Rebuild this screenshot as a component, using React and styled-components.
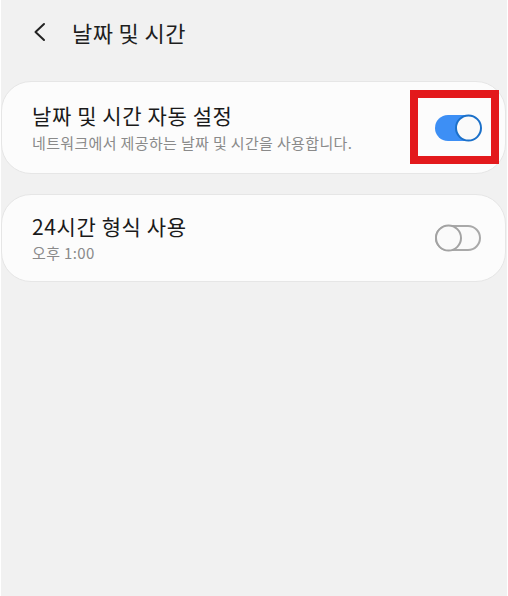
import React from "react";
import styled, { createGlobalStyle } from "styled-components";

const Global = createGlobalStyle`
  html, body { margin: 0; padding: 0; background: #f1f1f1; }
  body { font-family: "Noto Sans CJK KR", "Noto Sans", Roboto, sans-serif; }
`;

const Page = styled.div`
  width: 508px;
  height: 596px;
  box-sizing: border-box;
  background: #f1f1f1;
  border-left: 1px solid #ffffff;
  border-right: 1px solid #ffffff;
  display: flex;
  flex-direction: column;
  overflow: hidden;
`;

const Header = styled.div`
  height: 62px;
  display: flex;
  align-items: center;
  padding-left: 31px;
  gap: 24px;
  margin-top: 1px;
`;

const BackButton = styled.div`
  width: 16px;
  height: 22px;
  display: flex;
  align-items: center;
  justify-content: center;
`;

const Title = styled.div`
  font-size: 22px;
  color: #1e1e1e;
  letter-spacing: 0.4px;
`;

const List = styled.div`
  display: flex;
  flex-direction: column;
  gap: 20px;
  margin-top: 18px;
`;

const Card = styled.div`
  height: ${(p) => p.$h}px;
  margin-right: 1px;
  background: #fcfcfc;
  border: 1px solid #e6e6e6;
  border-radius: 30px;
  box-sizing: border-box;
  display: flex;
  align-items: center;
  padding: 0 24px 0 30px;
  position: relative;
`;

const Texts = styled.div`
  flex: 1;
  display: flex;
  flex-direction: column;
  gap: ${(p) => p.$gap}px;
`;

const Primary = styled.div`
  font-size: 21px;
  color: #1a1a1a;
  line-height: 24px;
  letter-spacing: 0.6px;
`;

const Secondary = styled.div`
  font-size: 15px;
  color: #8a8a8a;
  line-height: 18px;
  letter-spacing: 0.35px;
`;

const Track = styled.div`
  width: 46px;
  height: 26px;
  border-radius: 13px;
  box-sizing: border-box;
  position: relative;
  background: ${(p) => (p.$on ? "#3d8ff5" : "#fafafa")};
  border: ${(p) => (p.$on ? "none" : "2px solid #a9a9a9")};
`;

const Thumb = styled.div`
  position: absolute;
  top: 50%;
  width: 27px;
  height: 27px;
  border-radius: 50%;
  box-sizing: border-box;
  background: #fafafa;
  transform: translateY(-50%);
  ${(p) =>
    p.$on
      ? "right: -1px; border: 2px solid #1b70c9;"
      : "left: -2px; border: 2px solid #a3a3a3;"}
`;

const Highlight = styled.div`
  position: absolute;
  right: 6px;
  top: 8px;
  width: 89px;
  height: 74px;
  box-sizing: border-box;
  border: 8px solid #e3191c;
`;

const ToggleWrap = styled.div`
  margin-right: 0;
`;

function Toggle({ on }) {
  return (
    <ToggleWrap>
      <Track $on={on}>
        <Thumb $on={on} />
      </Track>
    </ToggleWrap>
  );
}

export default function App() {
  return (
    <>
      <Global />
      <Page>
        <Header>
          <BackButton>
            <svg width="16" height="22" viewBox="0 0 16 22">
              <path d="M12 3 L3.5 11 L12 19" fill="none" stroke="#222" strokeWidth="2" strokeLinecap="round" strokeLinejoin="round" />
            </svg>
          </BackButton>
          <Title>날짜 및 시간</Title>
        </Header>
        <List>
          <Card $h={93}>
            <Texts $gap={7}>
              <Primary>날짜 및 시간 자동 설정</Primary>
              <Secondary>네트워크에서 제공하는 날짜 및 시간을 사용합니다.</Secondary>
            </Texts>
            <Toggle on />
            <Highlight />
          </Card>
          <Card $h={88}>
            <Texts $gap={6}>
              <Primary>24시간 형식 사용</Primary>
              <Secondary>오후 1:00</Secondary>
            </Texts>
            <Toggle />
          </Card>
        </List>
      </Page>
    </>
  );
}
